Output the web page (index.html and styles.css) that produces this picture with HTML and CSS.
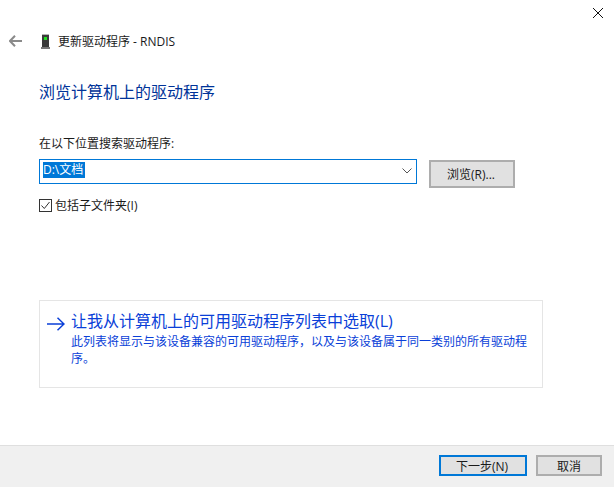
FILE: index.html
```html
<!DOCTYPE html>
<html lang="zh-CN">
<head>
<meta charset="utf-8">
<title>更新驱动程序 - RNDIS</title>
<link rel="stylesheet" href="styles.css">
</head>
<body>
<div class="dialog">
  <div class="closebar">
    <svg class="close" width="10" height="10" viewBox="0 0 10 10"><path d="M0 0L10 10M10 0L0 10" stroke="#111" stroke-width="1" fill="none"/></svg>
  </div>
  <div class="titlebar">
    <svg class="back" width="13" height="12" viewBox="0 0 13 12"><path d="M6 .8L1 6l5 5.200M1.200 6H13" stroke="#8a8a8a" stroke-width="2" fill="none"/></svg>
    <svg class="device" width="9" height="15" viewBox="0 0 9 15"><rect x="1" y="0" width="7" height="13" fill="#3a3a3a"/><rect x="1" y="0" width="7" height="1" fill="#b5b5b5"/><rect x="3" y="3" width="3" height="3" fill="#22e022"/><rect x="0" y="13" width="9" height="2" fill="#777"/></svg>
    <span class="title">更新驱动程序 - RNDIS</span>
  </div>
  <main class="content">
    <h1 class="heading">浏览计算机上的驱动程序</h1>
    <div class="label">在以下位置搜索驱动程序:</div>
    <div class="pathrow">
      <div class="combo">
        <span class="selected">D:\文档</span>
        <svg width="10" height="6" viewBox="0 0 10 6"><path d="M.5 .5L5 5l4.500-4.500" stroke="#555" stroke-width="1" fill="none"/></svg>
      </div>
      <div class="btn browse">浏览(R)...</div>
    </div>
    <label class="check">
      <svg width="13" height="13" viewBox="0 0 13 13"><rect x=".5" y=".5" width="12" height="12" fill="#fff" stroke="#333"/><path d="M2.500 6.500l2.800 3 5.200-6.500" stroke="#333" stroke-width="1" fill="none"/></svg>
      <span>包括子文件夹(I)</span>
    </label>
    <div class="linkbox">
      <svg class="arrow" width="18" height="14" viewBox="0 0 18 14"><path d="M0 7H17M10.500 .8L17 7l-6.500 6.200" stroke="#0a3fd8" stroke-width="1.500" fill="none"/></svg>
      <div class="linktext">
        <div class="linktitle">让我从计算机上的可用驱动程序列表中选取(L)</div>
        <div class="linkdesc">此列表将显示与该设备兼容的可用驱动程序，以及与该设备属于同一类别的所有驱动程序。</div>
      </div>
    </div>
  </main>
  <footer class="footer">
    <div class="btn next">下一步(N)</div>
    <div class="btn cancel">取消</div>
  </footer>
</div>
</body>
</html>
```

FILE: styles.css
```css
* { box-sizing: border-box; }
html, body { margin: 0; padding: 0; }
body {
  width: 614px;
  height: 487px;
  overflow: hidden;
  background: #fff;
  color: #1a1a1a;
  font-family: "Open Sans", "Noto Sans CJK SC", sans-serif;
  font-size: 12px;
}
.dialog { display: flex; flex-direction: column; height: 487px; }
.closebar { display: flex; justify-content: flex-end; height: 33px; padding: 8px 11px 0 0; }
.close { display: block; }
.titlebar { display: flex; align-items: center; height: 16px; padding-left: 9px; }
.back { margin-right: 19px; }
.device { margin-right: 8px; }
.title { line-height: 16px; padding-top: 2px; height: 18px; }
.content { flex: 1; padding: 0 0 0 39px; }
.heading { margin: 33px 0 0; font-size: 16px; font-weight: 400; line-height: 20px; color: #003399; }
.label { margin-top: 34px; line-height: 16px; height: 16px; }
.pathrow { display: flex; align-items: flex-start; margin-top: 7px; }
.combo {
  display: flex; align-items: flex-start; justify-content: space-between;
  width: 378px; height: 25px; padding: 2px 3px 0;
  border: 1px solid #0078d7; background: #fff;
}
.selected { background: #0078d7; color: #fff; line-height: 16px; height: 16px; padding-right: 2px; }
.combo svg { margin: 6px 1px 0 0; }
.btn {
  display: flex; align-items: center; justify-content: center;
  background: #e1e1e1; border: 2px solid #adadad; color: #1a1a1a;
}
.browse { width: 86px; height: 28px; margin: 1px 0 0 12px; padding-right: 2px; }
.check { display: flex; align-items: center; gap: 3px; margin-top: 9px; height: 16px; }
.linkbox {
  display: flex; width: 504px; height: 88px; margin-top: 87px;
  padding: 9px 12px 0 7px; border: 1px solid #e5e5e5;
}
.arrow { flex: none; margin: 7px 7px 0 0; }
.linktext { width: 460px; margin-left: -1px; }
.linktitle { font-size: 16px; line-height: 22px; color: #0a3fd8; }
.linkdesc { line-height: 17px; color: #0a3fd8; margin-top: 1px; }
.footer {
  display: flex; align-items: flex-start; justify-content: flex-end; gap: 9px;
  height: 42px; padding: 9px 12px 0 0;
  background: #f0f0f0; border-top: 1px solid #dfdfdf;
}
.next { width: 88px; height: 21px; border-color: #0078d7; padding-right: 2px; }
.cancel { width: 66px; height: 21px; }
```
